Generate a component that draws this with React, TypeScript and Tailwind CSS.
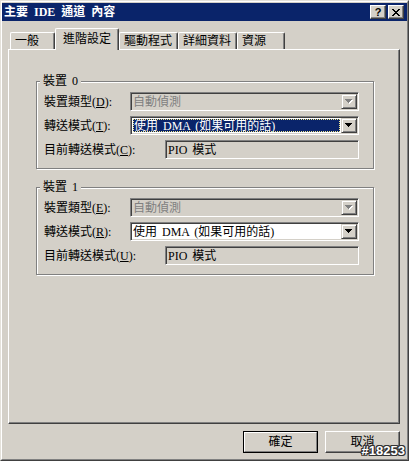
import React from "react";

function Arrow({ disabled }: { disabled?: boolean }) {
  const d = "M0 0h7v1H0z M1 1h5v1H1z M2 2h3v1H2z M3 3h1v1H3z";
  return (
    <svg width="8" height="5" viewBox="0 0 8 5" shapeRendering="crispEdges" className="block">
      {disabled && <path d={d} transform="translate(1,1)" fill="#ffffff" />}
      <path d={d} fill={disabled ? "#808080" : "#000000"} />
    </svg>
  );
}

function Combo({ text, disabled, selected }: { text: string; disabled?: boolean; selected?: boolean }) {
  return (
    <div
      className={`w-[229px] h-[19px] flex border border-t-[#808080] border-l-[#808080] border-r-white border-b-white shadow-[inset_1px_1px_0_#404040,inset_-1px_-1px_0_#d4d0c8] p-[1px] ${
        disabled ? "bg-[#d4d0c8]" : "bg-white"
      }`}
    >
      <div className="flex-1 h-full flex">
        {selected ? (
          <div className="flex-1 m-[1px] bg-[#0a246a] text-white flex items-center pl-[1px] outline outline-1 outline-dotted outline-[#f0e68c] -outline-offset-1">
            {text}
          </div>
        ) : (
          <div className={`flex-1 flex items-center pl-[1px] ${disabled ? "text-[#808080]" : "text-black"}`}>{text}</div>
        )}
      </div>
      <div className="w-[16px] h-[15px] flex items-center justify-center bg-[#d4d0c8] border border-t-[#d4d0c8] border-l-[#d4d0c8] border-r-[#404040] border-b-[#404040] shadow-[inset_1px_1px_0_#fff,inset_-1px_-1px_0_#808080]">
        <Arrow disabled={disabled} />
      </div>
    </div>
  );
}

function Field({ text }: { text: string }) {
  return (
    <div className="w-[194px] h-[19px] flex items-center pl-[2px] bg-[#d4d0c8] border border-t-[#808080] border-l-[#808080] border-r-white border-b-white shadow-[inset_1px_1px_0_#404040,inset_-1px_-1px_0_#d4d0c8]">
      {text}
    </div>
  );
}

function Label({ pre, acc, width }: { pre: string; acc: string; width: string }) {
  return (
    <div className={`${width} shrink-0`}>
      {pre}(<span className="underline underline-offset-1">{acc}</span>):
    </div>
  );
}

function Group({
  title,
  typeAcc,
  modeAcc,
  curAcc,
  selected,
  extra,
}: {
  title: string;
  typeAcc: string;
  modeAcc: string;
  curAcc: string;
  selected?: boolean;
  extra?: string;
}) {
  return (
    <div
      className={`relative w-[338px] h-[88px] border border-[#808080] shadow-[inset_1px_1px_0_#fff,1px_1px_0_#fff] pt-[10px] pl-[7px] flex flex-col gap-[5px] ${extra ?? ""}`}
    >
      <div className="absolute -top-[8px] left-[3px] px-[3px] bg-[#d4d0c8] leading-[14px]">{title}</div>
      <div className="flex items-center h-[19px]">
        <Label pre="裝置類型" acc={typeAcc} width="w-[86px]" />
        <Combo text="自動偵測" disabled />
      </div>
      <div className="flex items-center h-[19px]">
        <Label pre="轉送模式" acc={modeAcc} width="w-[86px]" />
        <Combo text="使用 DMA (如果可用的話)" selected={selected} />
      </div>
      <div className="flex items-center h-[19px]">
        <Label pre="目前轉送模式" acc={curAcc} width="w-[121px]" />
        <Field text="PIO 模式" />
      </div>
    </div>
  );
}

function Tab({ label, active, width }: { label: string; active?: boolean; width: string }) {
  if (active) {
    return (
      <div
        className={`${width} relative z-10 h-[22px] -mb-[1px] bg-[#d4d0c8] border-l border-t border-r border-l-white border-t-white border-r-[#404040] rounded-t-[2px] shadow-[inset_-1px_0_0_#808080] flex items-center pl-[7px] pb-[1px]`}
      >
        {label}
      </div>
    );
  }
  return (
    <div
      className={`${width} h-[17px] bg-[#d4d0c8] border-l border-t border-r border-l-white border-t-white border-r-[#404040] rounded-t-[2px] shadow-[inset_-1px_0_0_#808080] flex items-center pl-[4px]`}
    >
      {label}
    </div>
  );
}

export default function App() {
  return (
    <div className="relative w-[409px] h-[461px] overflow-hidden bg-[#d4d0c8] font-[family-name:'Liberation_Serif','Noto_Sans_CJK_TC',serif] text-[12px] leading-[14px] text-black [word-spacing:2px] border border-t-[#e4e1da] border-l-[#e4e1da] border-r-[#404040] border-b-[#404040]">
      <div className="h-full border border-t-white border-l-white border-r-[#808080] border-b-[#808080] pt-[1px] flex flex-col">
        {/* Title bar */}
        <div className="h-[18px] mx-0 bg-[#0a246a] flex items-center justify-between pl-[2px] pr-[3px]">
          <div className="text-white font-bold text-[12px] [word-spacing:3px]">主要 IDE 通道 內容</div>
          <div className="flex gap-[2px]">
            <div className="w-[16px] h-[14px] bg-[#d4d0c8] border border-t-white border-l-white border-r-[#404040] border-b-[#404040] shadow-[inset_-1px_-1px_0_#808080] flex items-center justify-center font-[family-name:'Liberation_Sans',sans-serif] font-bold text-[11px] leading-[11px]">
              ?
            </div>
            <div className="w-[16px] h-[14px] bg-[#d4d0c8] border border-t-white border-l-white border-r-[#404040] border-b-[#404040] shadow-[inset_-1px_-1px_0_#808080] flex items-center justify-center">
              <svg width="8" height="7" viewBox="0 0 8 7" shapeRendering="crispEdges">
                <path
                  d="M0 0h2v1h1v1h2V1h1V0h2v1H7v1H6v1H5v1h1v1h1v1h1v1H6V6H5V5H3v1H2v1H0V6h1V5h1V4h1V3H2V2H1V1H0z"
                  fill="#000"
                />
              </svg>
            </div>
          </div>
        </div>

        {/* Content */}
        <div className="px-[6px]">
          {/* Tabs */}
          <div className="mt-[7px] h-[21px] flex items-end pl-[2px]">
            <Tab label="一般" width="w-[45px]" />
            <Tab label="進階設定" width="w-[64px]" active />
            <Tab label="驅動程式" width="w-[59px]" />
            <Tab label="詳細資料" width="w-[59px]" />
            <Tab label="資源" width="w-[48px]" />
          </div>
          {/* Panel */}
          <div className="w-[392px] h-[375px] border border-t-white border-l-white border-r-[#404040] border-b-[#404040] shadow-[inset_-1px_-1px_0_#808080] pt-[31px] pl-[27px]">
            <Group title="裝置 0" typeAcc="D" modeAcc="T" curAcc="C" selected />
            <Group title="裝置 1" typeAcc="E" modeAcc="R" curAcc="U" extra="mt-[18px]" />
          </div>
          {/* Buttons */}
          <div className="w-[392px] mt-[7px] flex justify-end gap-[7px]">
            <div className="w-[75px] h-[22px] border border-black">
              <div className="h-full border border-t-white border-l-white border-r-[#808080] border-b-[#808080] flex items-center justify-center">
                確定
              </div>
            </div>
            <div className="w-[75px] h-[22px] border border-t-white border-l-white border-r-[#404040] border-b-[#404040] shadow-[inset_-1px_-1px_0_#808080] flex items-center justify-center">
              取消
            </div>
          </div>
        </div>
      </div>
      <div className="absolute right-[3px] bottom-[3px] font-[family-name:'Liberation_Sans',sans-serif] font-bold text-[13px] leading-[12px] text-white [text-shadow:1px_0_0_#333,-1px_0_0_#333,0_1px_0_#333,0_-1px_0_#333,1px_1px_0_#333,-1px_-1px_0_#333,1px_-1px_0_#333,-1px_1px_0_#333] [word-spacing:0px]">
        #18253
      </div>
    </div>
  );
}
